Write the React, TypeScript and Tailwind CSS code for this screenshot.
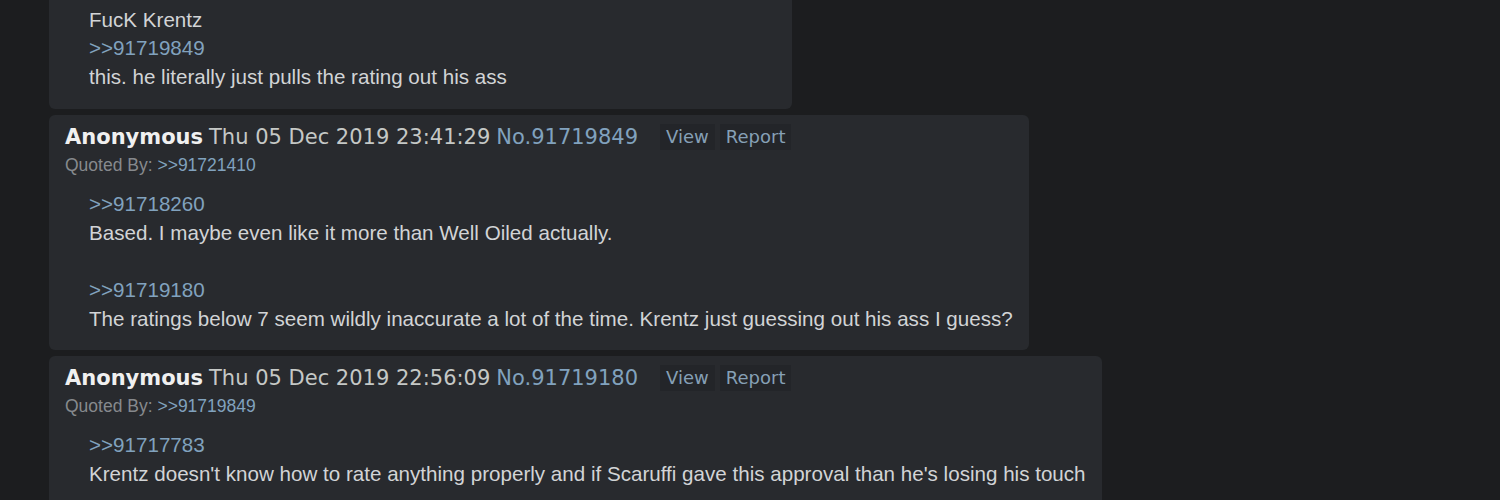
import React from "react";

type Line = { quote?: string; text?: string; blank?: boolean };

function Post({
  date,
  no,
  quotedBy,
  lines,
  width,
  className = "",
}: {
  date: string;
  no: string;
  quotedBy?: string;
  lines: Line[];
  width: string;
  className?: string;
}) {
  return (
    <div className={`bg-[#282a2e] rounded-[6px] pt-[8px] pb-[17px] pl-[16px] ${width} ${className}`}>
      <div className="flex items-center h-[28px] font-['DejaVu_Sans',sans-serif] text-[21px] leading-[28px] whitespace-nowrap">
        <span className="font-bold text-[#f0f0f0]">Anonymous</span>
        <span className="ml-[6px] text-[#c5c8c6]">{date}</span>
        <span className="ml-[6px] text-[#81a2be]">No.{no}</span>
        <span className="ml-[22px] bg-[#232529] text-[#86a0b6] text-[18px] leading-[26px] px-[6px]">View</span>
        <span className="ml-[5px] bg-[#232529] text-[#86a0b6] text-[18px] leading-[26px] px-[6px]">Report</span>
      </div>
      {quotedBy && (
        <div className="font-['Liberation_Sans',Arial,sans-serif] text-[17.5px] leading-[20px] mt-[4px] text-[#86898d]">
          Quoted By: <span className="text-[#81a2be]">&gt;&gt;{quotedBy}</span>
        </div>
      )}
      <div className="mt-[15px] pl-[24px] font-['Liberation_Sans',Arial,sans-serif] text-[20.6px] leading-[28.7px] text-[#d2d4d6]">
        {lines.map((l, i) =>
          l.blank ? (
            <div key={i} className="h-[28.7px]" />
          ) : l.quote ? (
            <div key={i} className="text-[#81a2be]">&gt;&gt;{l.quote}</div>
          ) : (
            <div key={i}>{l.text}</div>
          )
        )}
      </div>
    </div>
  );
}

export default function App() {
  return (
    <div className="w-[1500px] h-[500px] overflow-hidden bg-[#1c1d1f]">
      <div className="pl-[49px] flex flex-col items-start gap-[6px] -mt-[98px]">
        <Post
          date="Thu 05 Dec 2019 23:58:02"
          no="91719933"
          quotedBy="91720115"
          width="w-[743px]"
          lines={[
            { quote: "91719180" },
            { text: "FucK Krentz" },
            { quote: "91719849" },
            { text: "this. he literally just pulls the rating out his ass" },
          ]}
        />
        <Post
          date="Thu 05 Dec 2019 23:41:29"
          no="91719849"
          quotedBy="91721410"
          width="w-[980px]"
          lines={[
            { quote: "91718260" },
            { text: "Based. I maybe even like it more than Well Oiled actually." },
            { blank: true },
            { quote: "91719180" },
            {
              text: "The ratings below 7 seem wildly inaccurate a lot of the time. Krentz just guessing out his ass I guess?",
            },
          ]}
        />
        <Post
          date="Thu 05 Dec 2019 22:56:09"
          no="91719180"
          quotedBy="91719849"
          width="w-[1053px]"
          lines={[
            { quote: "91717783" },
            {
              text: "Krentz doesn't know how to rate anything properly and if Scaruffi gave this approval than he's losing his touch",
            },
            { blank: true },
            { text: "..." },
          ]}
        />
      </div>
    </div>
  );
}
